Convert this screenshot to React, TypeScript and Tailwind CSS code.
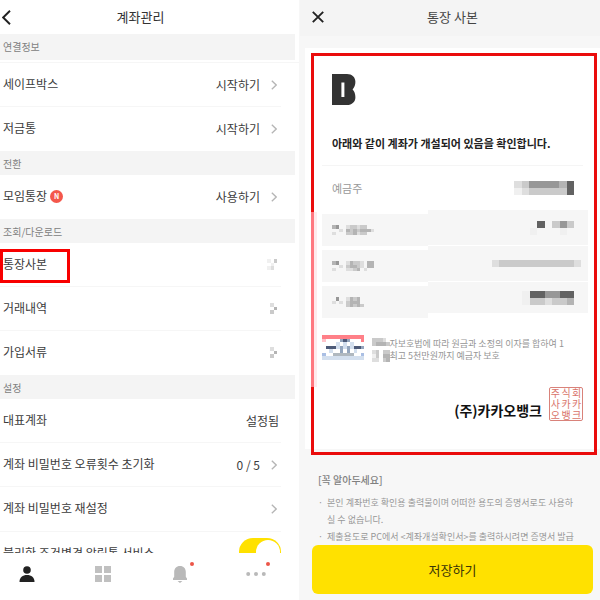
import type { ReactNode } from "react";

const MENU = [
    {
        title: "연결정보",
        rows: [
            { label: "세이프박스", value: "시작하기", end: "arrow" },
            { label: "저금통", value: "시작하기", end: "arrow" },
        ],
    },
    {
        title: "전환",
        rows: [{ label: "모임통장", value: "사용하기", end: "arrow", isNew: true }],
    },
    {
        title: "조회/다운로드",
        rows: [
            { label: "통장사본", end: "faint", marked: true },
            { label: "거래내역", end: "pixel" },
            { label: "가입서류", end: "pixel" },
        ],
    },
    {
        title: "설정",
        rows: [
            { label: "대표계좌", value: "설정됨" },
            { label: "계좌 비밀번호 오류횟수 초기화", value: "0 / 5", end: "arrow" },
            { label: "계좌 비밀번호 재설정", end: "arrow" },
        ],
    },
];

type Row = { label: string; value?: string; end?: string; isNew?: boolean; marked?: boolean };

// one character per cell, "." is empty
const COLORS: Record<string, string> = {
    a: "#f0f0f0",
    b: "#dedede",
    c: "#cacaca",
    d: "#b4b4b4",
    e: "#979797",
    f: "#626262",
    p: "#ff8088",
    q: "#ffc4ca",
    n: "#4d5a78",
    m: "#93a5bd",
    s: "#d3dfee",
    t: "#aabfe4",
    g: "#b0b8bf",
};

const Mosaic = ({ cells, width, height }: { cells: string[]; width: number; height: number }) => (
    <svg
        width={cells[0].length * width}
        height={cells.length * height}
        shapeRendering="crispEdges"
        className="shrink-0"
        aria-hidden="true"
    >
        {cells.map((line, y) =>
            line.split("").map((c, x) =>
                c === "." ? null : (
                    <rect key={`${x}-${y}`} x={x * width} y={y * height} width={width} height={height} fill={COLORS[c]} />
                )
            )
        )}
    </svg>
);

const Arrow = () => (
    <svg width="6" height="10" viewBox="0 0 6 10" fill="none" stroke="#b5b5b5" strokeWidth="1.3" aria-hidden="true">
        <path d="M0.8 0.8 5.2 5 0.8 9.2" />
    </svg>
);

const RowEnd = ({ end }: { end?: string }) => {
    if (end === "arrow") return <Arrow />;
    if (end === "faint") return <Mosaic cells={["a.c", ".a.", "ab."]} width={3.5} height={3.5} />;
    if (end === "pixel") return <Mosaic cells={["b.", ".d", "c."]} width={3.5} height={3.5} />;
    return null;
};

const MenuRow = ({ row }: { row: Row }) => (
    <li className="relative mr-[18px] border-b border-[#f6f6f6] last:border-transparent">
        <button className="flex h-[43px] w-full items-center pl-[3px] pr-1 text-left text-xs text-[#3c3c3c]">
            <span className="pb-0.5">{row.label}</span>
            {row.isNew && (
                <span className="ml-[3px] flex size-[13px] items-center justify-center rounded-full bg-[#f4574b] text-[7px] font-bold text-white">
                    N
                </span>
            )}
            <span className={row.end ? "ml-auto mr-[11px]" : "-mr-1 ml-auto pr-0.5"}>{row.value}</span>
            <RowEnd end={row.end} />
        </button>
        {row.marked && <span className="absolute left-0 top-1.5 h-[34px] w-[70px] border-[3px] border-[#f80000]" />}
    </li>
);

const Tab = ({ label, dot, children }: { label: string; dot?: boolean; children: ReactNode }) => (
    <button aria-label={label} className="relative flex size-5 items-center justify-center">
        {children}
        {dot && <span className="absolute -right-1 -top-0.5 size-1 rounded-full bg-[#ec5548]" />}
    </button>
);

const AccountPanel = () => (
    <section className="flex w-1/2 flex-col border-r border-[#f7f7f7] bg-white">
        <header className="mr-[18px] grid h-[34px] shrink-0 grid-cols-[1fr_auto_1fr] items-center">
            <button aria-label="뒤로" className="pl-0.5">
                <svg width="9" height="15" viewBox="0 0 9 15" fill="none" stroke="#222" strokeWidth="1.9">
                    <path d="M8 0.8 1.2 7.5 8 14.2" />
                </svg>
            </button>
            <h1 className="text-[13px] text-[#333]">계좌관리</h1>
        </header>
        <div className="min-h-0 flex-1 overflow-hidden">
            {MENU.map((group, i) => (
                <div key={group.title}>
                    <h2
                        className={`mr-1 flex items-center bg-[#f4f4f4] pl-[3px] text-[10px] text-[#808080] ${
                            i === 0 ? "mb-0.5 h-[26px] pb-0.5" : "h-6"
                        }`}
                    >
                        {group.title}
                    </h2>
                    <ul className={i === 0 ? "border-t border-[#f6f6f6]" : ""}>
                        {group.rows.map((row) => (
                            <MenuRow key={row.label} row={row} />
                        ))}
                    </ul>
                </div>
            ))}
            <label className="mr-[18px] flex h-11 items-center justify-between border-t border-[#f6f6f6] pl-[3px] text-xs text-[#3c3c3c]">
                <span className="pb-0.5">불리한 조건변경 알림톡 서비스</span>
                <input
                    type="checkbox"
                    defaultChecked
                    className="relative mb-1 h-7 w-[42px] appearance-none rounded-full bg-[#ffe100] before:absolute before:right-px before:top-0.5 before:size-6 before:rounded-full before:bg-white"
                />
            </label>
        </div>
        <nav className="flex h-[47px] shrink-0 items-center justify-between pb-[5px] pl-[17px] pr-[33px]">
            <Tab label="홈">
                <svg width="16" height="16" viewBox="0 0 16 16" fill="#222">
                    <circle cx="8" cy="4" r="3.8" />
                    <path d="M0.5 16C0.5 11.2 3.6 9 8 9s7.5 2.2 7.5 7z" />
                </svg>
            </Tab>
            <Tab label="전체">
                <svg width="16" height="16" viewBox="0 0 16 16" fill="#c0c0c0">
                    <path d="M0 0h7v7H0zM9 0h7v7H9zM0 9h7v7H0zM9 9h7v7H9z" />
                </svg>
            </Tab>
            <Tab label="알림" dot>
                <svg width="14" height="17" viewBox="0 0 14 17" fill="#b9b9b9">
                    <path d="M7 0c3.6 0 5.8 2.6 5.8 6v4.8L14 12.6V14H0v-1.4l1.2-1.8V6C1.2 2.6 3.4 0 7 0zM4.6 15h4.8L7 17z" />
                </svg>
            </Tab>
            <Tab label="더보기" dot>
                <svg width="20" height="4" viewBox="0 0 20 4" fill="#b9b9b9">
                    <circle cx="2.2" cy="2" r="2" />
                    <circle cx="10" cy="2" r="2" />
                    <circle cx="17.8" cy="2" r="2" />
                </svg>
            </Tab>
        </nav>
    </section>
);

const HIDDEN_ROWS = [
    { label: ["de..bccbcc..", "..b.dcdcdddb", "b...ccdbcc.."], value: ["..f.cec", ".a...a."] },
    { label: ["de..bdccb.dd", "..b.cddcb.dd", "b...bbcd.b.."], value: [".bccccccccccb"] },
    { label: [".e..bdcd....", "b.b.cddd....", "....cdcdc..."], value: ["affeeff", "accbccd"] },
];

const Certificate = () => (
    <article className="relative ml-[5px] bg-white pb-7 pl-[17px] pr-3 pt-[26px]">
        <svg width="24" height="31" viewBox="0 0 24 31" className="ml-[10px]" role="img" aria-label="카카오뱅크">
            <path
                fill="#333"
                fillRule="evenodd"
                d="M0 0h15c5 0 8.4 3.200 8.400 7.800 0 3.200-1 5.600-2.800 7.700 1.800 2 2.800 4.400 2.800 7.700C23.400 27.800 20 31 15 31H0zM9.400 8.500v14.500h3V8.500z"
            />
        </svg>
        <h2 className="mb-[14px] ml-[10px] mt-[30px] text-[11px] font-bold leading-4 text-[#222]">
            아래와 같이 계좌가 개설되어 있음을 확인합니다.
        </h2>
        <dl>
            <div className="mr-[5px] flex h-[45px] items-center justify-between border-t border-[#f5f5f5] pl-[10px] pr-[9px] text-[11px] text-[#999]">
                <dt>예금주</dt>
                <dd>
                    <Mosaic cells={["bceeeedf", "abcccccf"]} width={7.5} height={7} />
                </dd>
            </div>
            {HIDDEN_ROWS.map((row, i) => (
                <div key={i} className="flex h-9 items-start">
                    <dt className="mt-1 flex h-8 w-[106px] items-center bg-[#f6f6f6] pl-[10px]">
                        <Mosaic cells={row.label} width={3.5} height={3.5} />
                    </dt>
                    <dd
                        className={`flex flex-1 items-center justify-end bg-[#f6f6f6] ${i === 1 ? "pr-[7px]" : "pr-[14px]"} ${
                            i === 2 ? "h-[31px]" : "h-[35px]"
                        }`}
                    >
                        <Mosaic cells={row.value} width={7.5} height={7} />
                    </dd>
                </div>
            ))}
        </dl>
        <div className="mt-[17px] flex items-start gap-2">
            <Mosaic
                cells={[
                    "pppppppppppp",
                    "q....mnm...p",
                    "....s.s.s...",
                    ".nnnsmsmsnnm",
                    "..s..m.m.s..",
                    "t..gggggg..t",
                    "ssssssssssss",
                ]}
                width={3.5}
                height={3.5}
            />
            <div className="flex pt-[3px]">
                <Mosaic cells={["cccb.", "cdddc", ".....", "bc.cc", "ac.dd", "bb.cd"]} width={3.5} height={4} />
                <p className="text-[9px] leading-3 text-[#959595]">
                    자보호법에 따라 원금과 소정의 이자를 합하여 1<br />
                    최고 5천만원까지 예금자 보호
                </p>
            </div>
        </div>
        <div className="mr-[5px] mt-[25px] flex items-center justify-end gap-[7px]">
            <strong className="pt-3 text-sm leading-5 text-[#111]">(주)카카오뱅크</strong>
            <span className="grid size-[34px] grid-cols-3 place-items-center rounded-xs border border-[#d9827a] text-[10px] leading-[10px] text-[#d9746b]">
                {"주식회사카카오뱅크".split("").map((c, i) => (
                    <span key={i}>{c}</span>
                ))}
            </span>
        </div>
        <span className="pointer-events-none absolute -bottom-1.5 left-1.5 right-[3px] top-[5px] border-[3px] border-[#ea0c0c]">
            <span className="absolute -left-[3px] bottom-[65px] top-[156px] w-1.5 border-l-[3px] border-r-[3px] border-l-[#ff7880] border-r-[#ffeaec]" />
        </span>
    </article>
);

const CopyPanel = () => (
    <section className="flex w-1/2 flex-col bg-[#f7f7f7]">
        <header className="grid h-9 shrink-0 grid-cols-[1fr_auto_1fr] items-center bg-[#f4f4f4] pb-0.5 pl-3 pr-[7px]">
            <button aria-label="닫기">
                <svg width="12" height="12" viewBox="0 0 12 12" fill="none" stroke="#222" strokeWidth="1.9">
                    <path d="M0.8 0.8 11.2 11.2M11.2 0.8 0.8 11.2" />
                </svg>
            </button>
            <h1 className="text-[13px] text-[#444]">통장 사본</h1>
        </header>
        <div className="min-h-0 flex-1 overflow-hidden pt-3">
            <Certificate />
            <div className="pl-[18px] pr-3 pt-[22px] leading-[17px]">
                <h3 className="text-[10px] font-medium text-[#808080]">[꼭 알아두세요]</h3>
                <ul className="mt-1.5 text-[9px] text-[#989898]">
                    <li className="flex gap-1">
                        <span>·</span>
                        <span>
                            본인 계좌번호 확인용 출력물이며 어떠한 용도의 증명서로도 사용하
                            <br />실 수 없습니다.
                        </span>
                    </li>
                    <li className="flex gap-1 whitespace-nowrap">
                        <span>·</span>
                        <span>제출용도로 PC에서 &lt;계좌개설확인서&gt;를 출력하시려면 증명서 발급</span>
                    </li>
                </ul>
            </div>
        </div>
        <footer className="shrink-0 pb-1.5 pl-3 pr-[7px]">
            <button className="h-[49px] w-full rounded-md bg-[#ffe100] text-[13px] text-[#3a3408]">저장하기</button>
        </footer>
    </section>
);

export default function App() {
    return (
        <main className="flex h-screen overflow-hidden font-['Noto_Sans_CJK_KR',sans-serif]">
            <AccountPanel />
            <CopyPanel />
        </main>
    );
}
